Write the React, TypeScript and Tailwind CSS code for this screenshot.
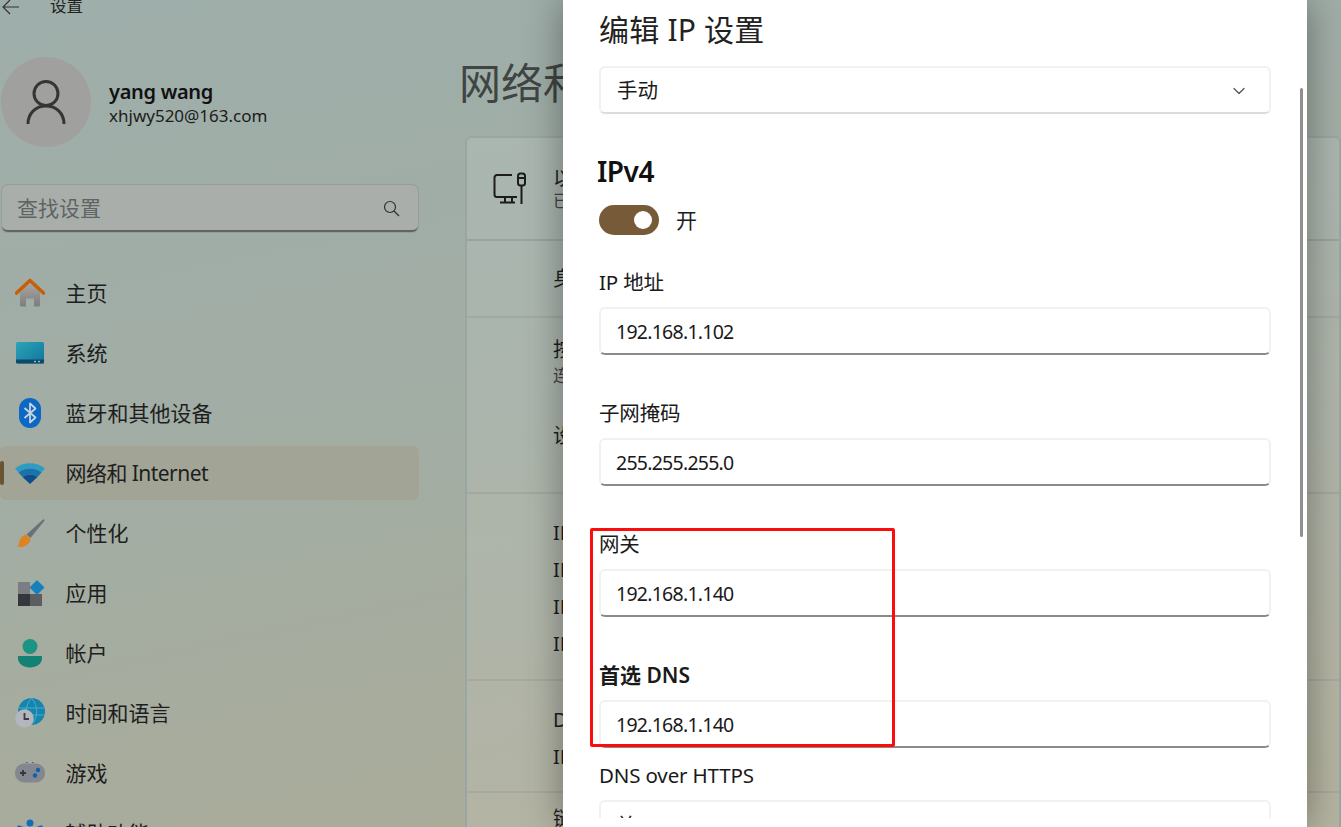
import React from 'react';
import { ChevronDown } from 'lucide-react';

const HomeIcon = () => (
  <svg width="30" height="30" viewBox="0 0 30 30">
    <defs>
      <linearGradient id="homeBody" x1="0" y1="0" x2="0" y2="1">
        <stop offset="0" stopColor="#a9a7a3" />
        <stop offset="1" stopColor="#7f7d7c" />
      </linearGradient>
    </defs>
    <path d="M5 14 15 5l10 9v13a1.500 1.500 0 0 1-1.500 1.500H19v-8h-8v8H6.500A1.500 1.500 0 0 1 5 27z" fill="url(#homeBody)" />
    <path d="M1.500 15 15 2.500 28.500 15" fill="none" stroke="#c65f0a" strokeWidth="3.600" strokeLinecap="round" strokeLinejoin="round" />
  </svg>
);

const SystemIcon = () => (
  <svg width="30" height="30" viewBox="0 0 30 30">
    <defs>
      <linearGradient id="sysBody" x1="0" y1="0" x2="1" y2="1">
        <stop offset="0" stopColor="#2aa5b8" />
        <stop offset="1" stopColor="#14749c" />
      </linearGradient>
    </defs>
    <rect x="1" y="4" width="28" height="21.500" rx="1.500" fill="url(#sysBody)" />
    <path d="M1 21.500h28v2.500a1.500 1.500 0 0 1-1.500 1.500h-25A1.500 1.500 0 0 1 1 24z" fill="#0d4a68" />
    <rect x="19" y="22.800" width="2" height="1.500" fill="#8fb6c6" />
    <rect x="23" y="22.800" width="2" height="1.500" fill="#8fb6c6" />
  </svg>
);

const BluetoothIcon = () => (
  <svg width="30" height="30" viewBox="0 0 30 30">
    <rect x="4" y="0" width="22" height="30" rx="11" fill="#0b68c4" />
    <path d="m9.500 10 11 9.500-5.500 5V5.500l5.500 5-11 9.500" fill="none" stroke="#c9d3da" strokeWidth="1.800" strokeLinejoin="round" />
  </svg>
);

const WifiIcon = () => (
  <svg width="30" height="30" viewBox="0 0 30 30">
    <path d="M0 10.500C8 3.500 22 3.500 30 10.500L26.500 14.500C20 9 10 9 3.500 14.500z" fill="#2d9cc4" />
    <path d="M3.500 14.500C10 9 20 9 26.500 14.500L22.500 19C18 15.500 12 15.500 7.500 19z" fill="#1a74ac" />
    <path d="M7.500 19C12 15.500 18 15.500 22.500 19L15 26z" fill="#0c4f8c" />
  </svg>
);

const BrushIcon = () => (
  <svg width="30" height="30" viewBox="0 0 30 30">
    <path d="M28 1.500c1.200-.6 1.800.4 1.200 1.500L15.500 20l-4-3.500z" fill="#6f7076" />
    <path d="M10.500 16.500 15.500 21c-.5 5-5 8.500-13.500 8 2.500-2 1.500-4.500 3-7.500 1-2.200 3-4 5.500-5z" fill="#dd8420" />
  </svg>
);

const AppsIcon = () => (
  <svg width="30" height="30" viewBox="0 0 30 30">
    <rect x="3" y="4" width="12" height="12" fill="#7a7d82" />
    <rect x="3" y="16" width="12" height="12" fill="#35373a" />
    <rect x="15" y="16" width="12" height="12" fill="#5b5d60" />
    <path d="M22 2 29.500 9.500 22 17l-7.500-7.500z" fill="#1680bd" />
  </svg>
);

const AccountIcon = () => (
  <svg width="30" height="30" viewBox="0 0 30 30">
    <circle cx="15" cy="8.500" r="7.500" fill="#1c9484" />
    <path d="M3 18h24v2.500c0 5-5.500 9-12 9s-12-4-12-9z" fill="#148272" />
  </svg>
);

const GlobeIcon = () => (
  <svg width="30" height="30" viewBox="0 0 30 30">
    <circle cx="16.500" cy="13.500" r="13.500" fill="#1684ae" />
    <path d="M3.500 10h26M3.500 17h26M16.500 0c-7 8-7 19 0 27M16.500 0c7 8 7 19 0 27" fill="none" stroke="#45b0c4" strokeWidth="1" />
    <circle cx="9.500" cy="20.500" r="9.300" fill="#b3b6bd" />
    <path d="M9.500 15v6h4.500" fill="none" stroke="#3b3d42" strokeWidth="1.800" />
  </svg>
);

const GameIcon = () => (
  <svg width="30" height="30" viewBox="0 0 30 30">
    <rect x="0" y="5.500" width="30" height="19" rx="9" fill="#84878f" />
    <path d="M8 12v6M5 15h6" stroke="#34363a" strokeWidth="1.800" />
    <circle cx="23" cy="12" r="2.200" fill="#0e62b0" />
    <circle cx="20" cy="17.500" r="2.200" fill="#0e62b0" />
    <rect x="11" y="4" width="1.500" height="1" fill="#55575c" />
    <rect x="17" y="4" width="1.500" height="1" fill="#55575c" />
  </svg>
);

const AccessibilityIcon = () => (
  <svg width="30" height="30" viewBox="0 0 30 30">
    <circle cx="15" cy="5" r="3.500" fill="#0e6fb8" />
    <path d="M4 9c6 3.500 16 3.500 22 0M15 12v8M15 20l-5 9M15 20l5 9" fill="none" stroke="#0e6fb8" strokeWidth="3.500" strokeLinecap="round" />
  </svg>
);

const navItems = [
  { label: '主页', icon: <HomeIcon /> },
  { label: '系统', icon: <SystemIcon /> },
  { label: '蓝牙和其他设备', icon: <BluetoothIcon /> },
  { label: '网络和 Internet', icon: <WifiIcon />, active: true },
  { label: '个性化', icon: <BrushIcon /> },
  { label: '应用', icon: <AppsIcon /> },
  { label: '帐户', icon: <AccountIcon /> },
  { label: '时间和语言', icon: <GlobeIcon /> },
  { label: '游戏', icon: <GameIcon /> },
  { label: '辅助功能', icon: <AccessibilityIcon /> },
];

const Sidebar = () => (
  <aside className="w-[419px] shrink-0">
    <div className="flex h-[57px] items-start text-[#222]">
      <svg className="-mt-[1px] ml-[2px]" width="17" height="16" viewBox="0 0 17 16" fill="none" stroke="#333" strokeWidth="1.200">
        <path d="M17 8H1M8 1 1 8l7 7" />
      </svg>
      <span className="-mt-[6px] ml-[31px] text-[16.500px] leading-6">设置</span>
    </div>
    <div className="flex items-center">
      <div className="ml-[1px] flex h-[90px] w-[90px] shrink-0 items-center justify-center rounded-full bg-[#a0a09f]">
        <svg width="40" height="46" viewBox="0 0 40 46" fill="none" stroke="#353535" strokeWidth="3">
          <circle cx="20" cy="14.500" r="12" />
          <path d="M2 45c0-11 8-18 18-18s18 7 18 18" />
        </svg>
      </div>
      <div className="ml-[18px]">
        <div className="text-[20px] leading-[28px] font-semibold tracking-[-0.3px] text-[#111]">yang wang</div>
        <div className="text-[17px] leading-[20px] text-[#1c1c1c]">xhjwy520@163.com</div>
      </div>
    </div>
    <div className="mt-[38px] ml-[2px] flex h-[47px] w-[416px] items-center justify-between rounded-[6px] border-b-2 border-b-[#5f665f] bg-[#a9aeab] pt-[2px] pr-[18px] pl-[15px] shadow-[0_0_0_1px_rgba(130,140,130,0.45)]">
      <span className="text-[21px] text-[#5e6462]">查找设置</span>
      <svg width="17" height="17" viewBox="0 0 17 17" fill="none" stroke="#2f2f2f" strokeWidth="1.200">
        <circle cx="7" cy="7" r="5.500" />
        <path d="m11 11 5 5" />
      </svg>
    </div>
    <nav className="mt-[34px] flex flex-col gap-[6px]">
      {navItems.map((item) => (
        <div
          key={item.label}
          className={`relative flex h-[54px] shrink-0 items-center rounded-[6px] pl-[15px] ${item.active ? 'bg-[#a2a495]' : ''}`}
        >
          {item.active && <span className="absolute top-[15px] left-0 h-[24px] w-[4px] rounded-full bg-[#6b5335]" />}
          <span className="w-[50.500px] shrink-0">{item.icon}</span>
          <span className={`pt-[1px] text-[21px] whitespace-nowrap text-[#1e1e1e] ${item.active ? 'tracking-[-0.55px]' : ''}`}>{item.label}</span>
        </div>
      ))}
    </nav>
  </aside>
);

const rowText = 'text-[20px] leading-[37px] whitespace-nowrap text-[#1e1e1e]';

const MainPanel = () => (
  <main className="ml-[41px] min-w-0 flex-1">
    <h1 className="mt-[56px] h-[81px] -translate-x-[1px] text-[42px] leading-[54px] whitespace-nowrap text-[#3f4543]">网络和 Internet</h1>
    <section className="-mt-[1px] ml-[5px] rounded-t-[6px] border-2 border-[#9aa6a2] bg-white/10">
      <div className="flex h-[103px] items-center border-b-2 border-[#9ca39f] pl-[26px]">
        <svg width="34" height="34" viewBox="0 0 34 34" fill="none" stroke="#1c1c1c" strokeWidth="2">
          <path d="M19 3H4a2.500 2.500 0 0 0-2.500 2.500v17A2.500 2.500 0 0 0 4 25h20" />
          <path d="M12 25v5M19 25v5M7 30.500h15" />
          <rect x="25" y="1.500" width="7" height="12" rx="2.500" />
          <path d="M25 6h7M28.500 13.500V32" />
        </svg>
        <div className="ml-[26px] whitespace-nowrap text-[#1e1e1e]">
          <div className="text-[20px] leading-[24px]">以太网</div>
          <div className="text-[17px] leading-[20px] text-[#444]">已连接</div>
        </div>
      </div>
      <div className="flex h-[77px] items-center border-b-2 border-[#a2a8a2] pl-[86px]">
        <span className="text-[20px] text-[#1e1e1e]">身份验证设置</span>
      </div>
      <div className="h-[176px] border-b-2 border-[#a2a8a0] pt-[18px] pl-[86px]">
        <div className="text-[20px] leading-[28px] text-[#1e1e1e]">按流量计费的连接</div>
        <div className="text-[17px] leading-[24px] text-[#444]">连接到此网络时</div>
        <div className="mt-[34px] text-[20px] leading-[28px] text-[#1e1e1e]">设置数据限制</div>
      </div>
      <div className="h-[187px] border-b-2 border-[#a8a99c] pt-[20px] pl-[86px]">
        <div className={rowText}>IP 分配：</div>
        <div className={rowText}>IPv4 地址：</div>
        <div className={rowText}>IPv4 掩码：</div>
        <div className={rowText}>IPv4 网关：</div>
      </div>
      <div className="h-[112px] border-b-2 border-[#a8a99c] pt-[20px] pl-[86px]">
        <div className={rowText}>DNS 服务器分配：</div>
        <div className={rowText}>IPv4 DNS 服务器：</div>
      </div>
      <div className="h-[60px] pt-[7px] pl-[86px]">
        <div className={rowText}>链路速度</div>
      </div>
    </section>
  </main>
);

const Field = ({ label, value, strong, className }: { label: string; value: string; strong?: boolean; className: string }) => (
  <div className={className}>
    <div className={`h-[28px] leading-[28px] text-[#1a1a1a] ${strong ? 'text-[21px] font-semibold' : 'text-[20.500px] tracking-[-0.15px]'}`}>{label}</div>
    <div className="mt-[11px] flex h-[48px] items-center rounded-[6px] border-2 border-[#f1f1f1] border-b-[#8b8b8b] pt-[2px] pl-[15px] text-[19.500px] tracking-[-0.75px] text-[#1a1a1a]">
      {value}
    </div>
  </div>
);

const Dialog = () => (
  <div className="absolute top-0 left-[563px] h-[827px] w-[744px] bg-white shadow-[0_0_36px_rgba(0,0,0,0.38)]">
    <div className="h-[818px] overflow-hidden px-[36px]">
      <h2 className="mt-[8px] h-[44px] text-[30px] leading-[44px] tracking-[0.2px] text-[#222]">编辑 IP 设置</h2>
      <div className="mt-[14px] flex h-[48px] items-center justify-between rounded-[6px] border-2 border-[#f1f1f1] border-b-[#dcdcdc] pt-[1px] pr-[20px] pl-[16px] text-[20.500px] text-[#1a1a1a]">
        <span>手动</span>
        <ChevronDown size={20} strokeWidth={1.500} className="text-[#555]" />
      </div>
      <h3 className="mt-[39px] -ml-[2px] h-[36px] text-[28px] leading-[36px] font-semibold tracking-[-0.5px] text-[#111]">IPv4</h3>
      <div className="mt-[15px] flex items-center">
        <div className="flex h-[30px] w-[60px] items-center justify-end rounded-full bg-[#775a38] pr-[7px]">
          <span className="h-[18px] w-[18px] rounded-full bg-white" />
        </div>
        <span className="ml-[17px] pt-[1px] text-[21px] text-[#1e1e1e]">开</span>
      </div>
      <Field className="mt-[31px]" label="IP 地址" value="192.168.1.102" />
      <Field className="mt-[44px]" label="子网掩码" value="255.255.255.0" />
      <Field className="mt-[44px]" label="网关" value="192.168.1.140" />
      <Field className="mt-[44px]" label="首选 DNS" value="192.168.1.140" strong />
      <Field className="mt-[13px]" label="DNS over HTTPS" value="关" />
    </div>
    <div className="absolute top-[88px] left-[737px] h-[449px] w-[3px] rounded-full bg-[#8f8f8f]" />
  </div>
);

const App: React.FC = () => {
  return (
    <div
      className="relative flex h-[827px] w-[1341px] overflow-hidden bg-[linear-gradient(168deg,#9eaeaa_0%,#a2ada4_45%,#adab95_100%)]"
      style={{ fontFamily: '"Noto Sans", "Noto Sans CJK SC", sans-serif' }}
    >
      <Sidebar />
      <MainPanel />
      <Dialog />
      <div className="absolute top-[528px] left-[590px] h-[219px] w-[305px] rounded-[2px] border-[3px] border-[#fb0d0d]" />
    </div>
  );
};

export default App;
